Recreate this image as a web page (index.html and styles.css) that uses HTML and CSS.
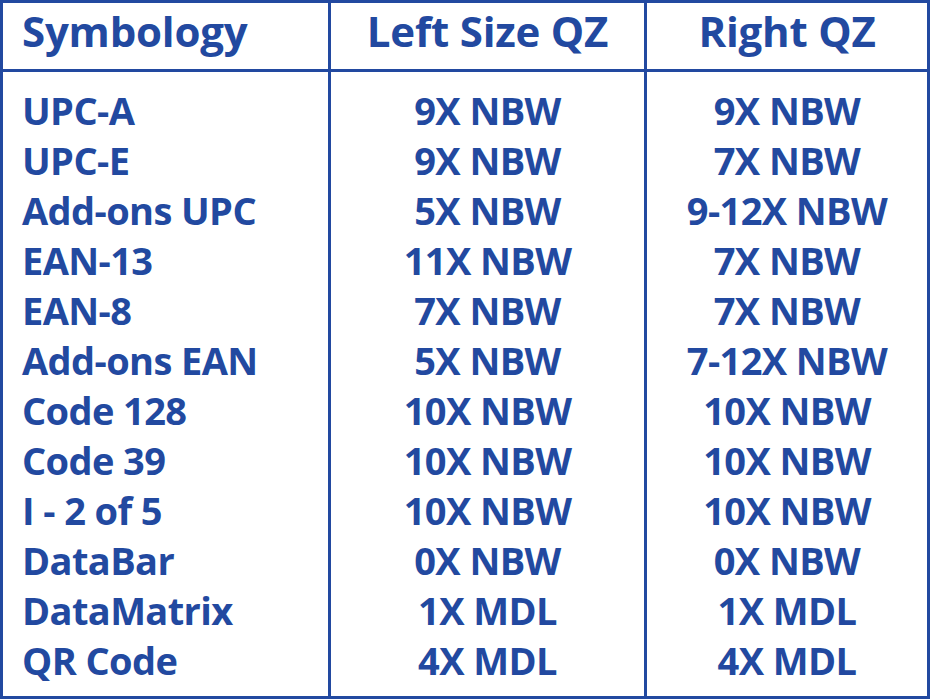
FILE: index.html
```html
<!DOCTYPE html>
<html>
<head>
<meta charset="utf-8">
<link rel="stylesheet" href="styles.css">
</head>
<body>
<div class="table">
  <div class="cell head first">Symbology</div>
  <div class="cell head center">Left Size QZ</div>
  <div class="cell head center">Right QZ</div>
  <div class="cell body first">
    <div class="line">UPC-A</div>
    <div class="line">UPC-E</div>
    <div class="line">Add-ons UPC</div>
    <div class="line">EAN-13</div>
    <div class="line">EAN-8</div>
    <div class="line">Add-ons EAN</div>
    <div class="line">Code 128</div>
    <div class="line">Code 39</div>
    <div class="line">I - 2 of 5</div>
    <div class="line">DataBar</div>
    <div class="line">DataMatrix</div>
    <div class="line">QR Code</div>
  </div>
  <div class="cell body center">
    <div class="line">9X NBW</div>
    <div class="line">9X NBW</div>
    <div class="line">5X NBW</div>
    <div class="line">11X NBW</div>
    <div class="line">7X NBW</div>
    <div class="line">5X NBW</div>
    <div class="line">10X NBW</div>
    <div class="line">10X NBW</div>
    <div class="line">10X NBW</div>
    <div class="line">0X NBW</div>
    <div class="line">1X MDL</div>
    <div class="line">4X MDL</div>
  </div>
  <div class="cell body center">
    <div class="line">9X NBW</div>
    <div class="line">7X NBW</div>
    <div class="line">9-12X NBW</div>
    <div class="line">7X NBW</div>
    <div class="line">7X NBW</div>
    <div class="line">7-12X NBW</div>
    <div class="line">10X NBW</div>
    <div class="line">10X NBW</div>
    <div class="line">10X NBW</div>
    <div class="line">0X NBW</div>
    <div class="line">1X MDL</div>
    <div class="line">4X MDL</div>
  </div>
</div>
</body>
</html>
```
FILE: styles.css
```css
html, body {
  margin: 0;
  padding: 0;
  background: #ffffff;
}
.table {
  width: 930px;
  height: 699px;
  box-sizing: border-box;
  border: 3px solid #2249a0;
  display: grid;
  grid-template-columns: 325px 316px 283px;
  grid-template-rows: 69px 1fr;
  font-family: "Open Sans", "Liberation Sans", sans-serif;
  font-weight: 700;
  color: #2249a0;
}
.cell {
  box-sizing: border-box;
}
.cell.center {
  border-left: 3px solid #2249a0;
  text-align: center;
}
.cell.first {
  padding-left: 19px;
}
.head {
  border-bottom: 3px solid #2249a0;
  display: flex;
  align-items: center;
  line-height: 1;
  font-size: 42px;
  letter-spacing: -0.2px;
  padding-bottom: 10px;
  white-space: nowrap;
}
.head.center {
  justify-content: center;
}
.body {
  padding-top: 13px;
  font-size: 38px;
  letter-spacing: -0.6px;
}
.line {
  height: 50px;
  line-height: 50px;
  white-space: nowrap;
}
```
